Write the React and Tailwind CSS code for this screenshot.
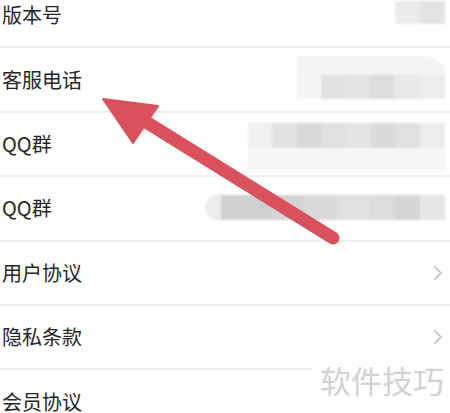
import React from 'react';

const font = { fontFamily: '"Noto Sans CJK SC", "Noto Sans", sans-serif' };

const Chevron = () => (
  <svg width="10" height="16" viewBox="0 0 10 16" className="mr-[2px]">
    <path d="M2 2 L8 8 L2 14" fill="none" stroke="#bdbdbd" strokeWidth="1.6" strokeLinecap="round" strokeLinejoin="round" />
  </svg>
);

// pixelated, blurred values on the right of the info rows
const BlurVersion = () => (
  <div className="flex h-[23px] w-[50px] mb-[6px] blur-[1px]">
    <div className="flex-1 bg-[#ebebeb]" />
    <div className="flex-1 bg-[#e3e3e3]" />
  </div>
);

const BlurPhone = () => (
  <div className="flex flex-col w-[148px] blur-[1px] mt-[-4px]">
    <div className="h-[19px] bg-[#f3f3f3] rounded-tr-[30px]" />
    <div className="flex h-[24px]">
      <div className="w-[24px] bg-[#f5f5f5]" />
      <div className="w-[24px] bg-[#e2e2e2]" />
      <div className="w-[25px] bg-[#e4e4e4]" />
      <div className="w-[24px] bg-[#dcdcdc]" />
      <div className="w-[25px] bg-[#e8e8e8]" />
      <div className="flex-1 bg-[#ededed]" />
    </div>
  </div>
);

const BlurQQ1 = () => (
  <div className="flex flex-col w-[197px] blur-[1px] mt-[8px]">
    <div className="flex h-[25px]">
      <div className="w-[24px] bg-[#f0f0f0]" />
      <div className="w-[25px] bg-[#e2e2e2]" />
      <div className="w-[24px] bg-[#d8d8d8]" />
      <div className="w-[25px] bg-[#e0e0e0]" />
      <div className="w-[25px] bg-[#e4e4e4]" />
      <div className="w-[24px] bg-[#dadada]" />
      <div className="w-[25px] bg-[#e0e0e0]" />
      <div className="flex-1 bg-[#ececec]" />
    </div>
    <div className="h-[24px] bg-[#f7f7f7]" />
  </div>
);

const BlurQQ2 = () => (
  <div className="flex h-[25px] w-[240px] blur-[1px] mt-[-2px] rounded-l-full overflow-hidden">
    <div className="w-[16px] bg-[#ececec]" />
    <div className="w-[50px] bg-[#d0d0d0]" />
    <div className="w-[33px] bg-[#d4d4d4]" />
    <div className="w-[33px] bg-[#dadada]" />
    <div className="w-[33px] bg-[#e0e0e0]" />
    <div className="w-[25px] bg-[#dcdcdc]" />
    <div className="w-[25px] bg-[#d6d6d6]" />
    <div className="flex-1 bg-[#e6e6e6]" />
  </div>
);

const rows = [
  { label: '版本号', right: <BlurVersion /> },
  { label: '客服电话', right: <BlurPhone /> },
  { label: 'QQ群', right: <BlurQQ1 /> },
  { label: 'QQ群', right: <BlurQQ2 /> },
  { label: '用户协议', right: <Chevron /> },
  { label: '隐私条款', right: <Chevron /> },
  { label: '会员协议', right: null },
];

export default function App() {
  return (
    <div className="relative w-[450px] h-[413px] overflow-hidden bg-white" style={font}>
      <div className="mt-[-16px]">
        {rows.map((row, i) => (
          <div
            key={i}
            className="flex items-center justify-between h-[64.4px] pl-[2px] pr-[5px] border-b-2 border-[#f0f0f0]"
          >
            <span className="text-[20px] text-[#262626] leading-none">{row.label}</span>
            {row.right}
          </div>
        ))}
      </div>

      {/* red arrow drawn over the list */}
      <svg className="absolute left-0 top-0" width="450" height="413" viewBox="0 0 450 413">
        <line x1="333" y1="238" x2="138" y2="117" stroke="#d9515b" strokeWidth="13" strokeLinecap="round" />
        <polygon points="103,99 158,106 133,143" fill="#d9515b" stroke="#d9515b" strokeWidth="2" strokeLinejoin="round" />
      </svg>

      {/* watermark */}
      <div className="absolute left-[312px] top-[360px] bg-white pl-[8px] pr-[6px] whitespace-nowrap text-[31px] leading-[40px] text-[#d2d2d2]">
        软件技巧
      </div>
    </div>
  );
}
